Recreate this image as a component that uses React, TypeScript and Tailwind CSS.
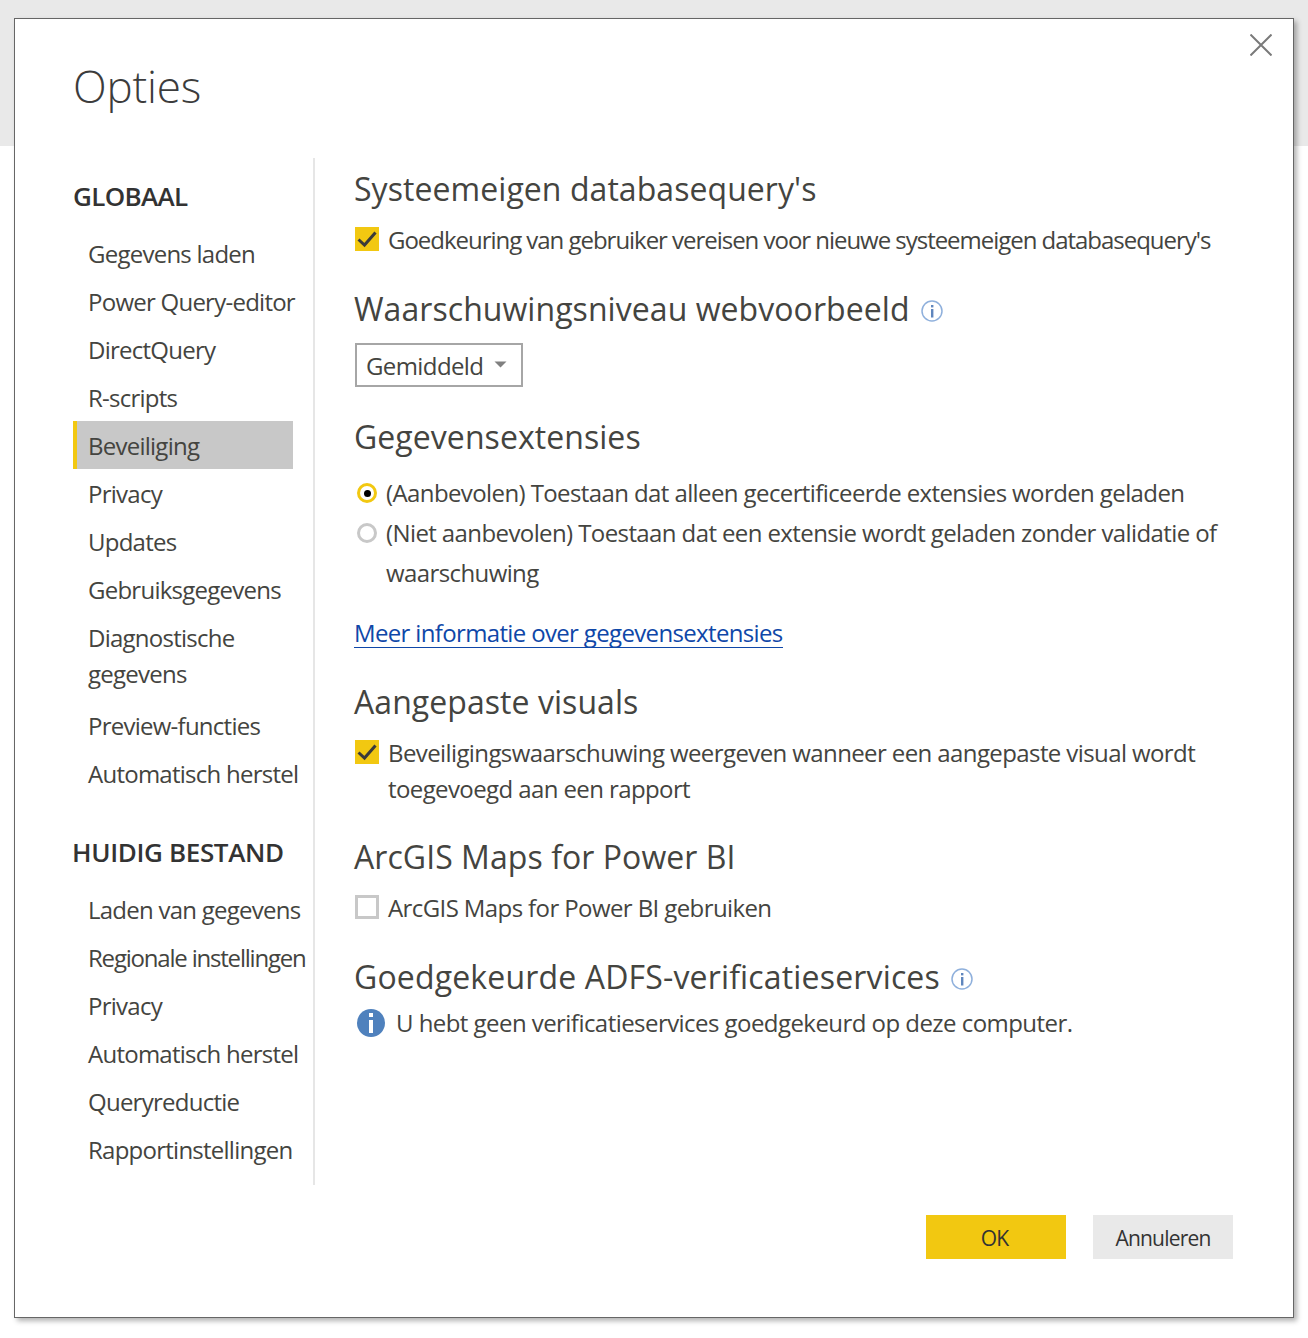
import React from "react";

const globalItems = [
  "Gegevens laden",
  "Power Query-editor",
  "DirectQuery",
  "R-scripts",
  "Beveiliging",
  "Privacy",
  "Updates",
  "Gebruiksgegevens",
  "Diagnostische gegevens",
  "Preview-functies",
  "Automatisch herstel",
];

const fileItems = [
  "Laden van gegevens",
  "Regionale instellingen",
  "Privacy",
  "Automatisch herstel",
  "Queryreductie",
  "Rapportinstellingen",
];

function NavItem({ label }: { label: string }) {
  if (label === "Beveiliging") {
    return (
      <div className="h-[48px] w-[220px] border-l-4 border-[#f2c811] bg-[#c8c8c8] pl-[11px] pt-[7px] leading-[36px]">
        {label}
      </div>
    );
  }
  if (label === "Diagnostische gegevens") {
    return (
      <div className="mb-[4px] w-[190px] pl-[15px] pt-[7px] pb-[5px] leading-[36px]">
        {label}
      </div>
    );
  }
  if (label === "Regionale instellingen") {
    return (
      <div className="h-[48px] whitespace-nowrap pl-[15px] pt-[7px] leading-[36px] tracking-[-1.2px]">
        {label}
      </div>
    );
  }
  return (
    <div className="h-[48px] whitespace-nowrap pl-[15px] pt-[7px] leading-[36px]">
      {label}
    </div>
  );
}

function SectionTitle({ children, className }: { children: React.ReactNode; className: string }) {
  return (
    <div className={`flex h-[40px] items-center gap-[10px] whitespace-nowrap text-[32px] leading-[40px] tracking-[0.06px] ${className}`}>
      {children}
    </div>
  );
}

function Checkbox({ checked }: { checked: boolean }) {
  if (!checked) {
    return <div className="mt-[5px] ml-[1px] h-[24px] w-[24px] shrink-0 border-[3px] border-[#c8c8c8] bg-white" />;
  }
  return (
    <div className="mt-[5px] ml-[1px] h-[24px] w-[24px] shrink-0 bg-[#f2c811]">
      <svg width="24" height="24" viewBox="0 0 24 24" fill="none">
        <path d="M3.5 12.5 L9.5 18 L20.5 5.5" stroke="#3a3a3a" strokeWidth="3" />
      </svg>
    </div>
  );
}

function SmallInfo() {
  return (
    <svg width="24" height="24" viewBox="0 0 24 24" fill="none" className="mt-[2px] shrink-0">
      <circle cx="12" cy="12" r="10" stroke="#8fb0dc" strokeWidth="1.5" />
      <rect x="11" y="10" width="2.4" height="8.5" fill="#5f86bd" />
      <rect x="11" y="6" width="2.4" height="2.4" fill="#5f86bd" />
    </svg>
  );
}

export default function App() {
  return (
    <div className="relative h-[1338px] w-[1308px] overflow-hidden bg-white pt-[18px] pl-[14px] font-['Open_Sans',sans-serif] text-[#444440]">
      <div className="absolute inset-x-0 top-0 h-[146px] bg-[#e9e9e9]" />

      <div className="relative flex h-[1300px] w-[1280px] flex-col border border-[#666666] bg-white shadow-[3px_3px_5px_rgba(0,0,0,0.3)]">
        <button className="absolute top-[15px] right-[21px] text-[#7a7a7a]">
          <svg width="22" height="22" viewBox="0 0 22 22" fill="none" stroke="currentColor" strokeWidth="2">
            <path d="M0.5 0.5 L21.5 21.5 M21.5 0.5 L0.5 21.5" />
          </svg>
        </button>

        <div className="h-[139px] pt-[37px] pl-[58px] text-[44px] leading-[60px] font-light tracking-[-0.2px] text-[#3c3c3c]">Opties</div>

        <div className="flex">
          <div className="ml-[58px] h-[1027px] w-[242px] border-r-2 border-[#e6e6e6] text-[24px] tracking-[-0.75px]">
            <div className="mt-[20px] mb-[15px] text-[26px] leading-[36px] font-semibold tracking-[-0.65px] text-[#333333]">GLOBAAL</div>
            {globalItems.map((item) => (
              <NavItem key={item} label={item} />
            ))}
            <div className="mt-[37px] mb-[15px] -ml-[1px] text-[26px] leading-[36px] font-semibold tracking-[-0.35px] whitespace-nowrap text-[#333333]">
              HUIDIG BESTAND
            </div>
            {fileItems.map((item) => (
              <NavItem key={item} label={item} />
            ))}
          </div>

          <div className="ml-[39px] flex-1 text-[24px] tracking-[-0.6px]">
            <SectionTitle className="mt-[12px]"><span className="pb-[2px]">Systeemeigen databasequery's</span></SectionTitle>
            <div className="mt-[12px] flex gap-[9px] leading-[36px] tracking-[-1.03px] whitespace-nowrap">
              <Checkbox checked />
              <span>Goedkeuring van gebruiker vereisen voor nieuwe systeemeigen databasequery's</span>
            </div>

            <SectionTitle className="mt-[32px]">
              <span className="pb-[2px]">Waarschuwingsniveau webvoorbeeld</span>
              <SmallInfo />
            </SectionTitle>
            <div className="mt-[13px] ml-[1px] flex h-[44px] w-[168px] items-center border-2 border-[#a6a6a6] pl-[9px]">
              <span className="pt-[2px]">Gemiddeld</span>
              <svg width="13" height="7" viewBox="0 0 13 7" className="mt-[-2px] ml-[11px]">
                <path d="M0.5 0.5 H12.5 L6.5 6.5 Z" fill="#808080" />
              </svg>
            </div>

            <SectionTitle className="mt-[31px]"><span className="pb-[2px]">Gegevensextensies</span></SectionTitle>
            <div className="mt-[15px] flex gap-[9px] leading-[40px] whitespace-nowrap">
              <div className="mt-[10px] ml-[3px] flex h-[20px] w-[20px] shrink-0 items-center justify-center rounded-full border-[3px] border-[#f2c811] bg-white">
                <div className="h-[7px] w-[7px] rounded-full bg-black" />
              </div>
              <span>(Aanbevolen) Toestaan dat alleen gecertificeerde extensies worden geladen</span>
            </div>
            <div className="flex w-[880px] gap-[9px] leading-[40px]">
              <div className="mt-[10px] ml-[3px] h-[20px] w-[20px] shrink-0 rounded-full border-[3px] border-[#c8c8c8] bg-white" />
              <span>(Niet aanbevolen) Toestaan dat een extensie wordt geladen zonder validatie of waarschuwing</span>
            </div>

            <div className="mt-[20px] h-[40px]">
              <a className="block h-[35px] w-fit border-b border-[#0f47a8] leading-[40px] tracking-[-0.65px] text-[#0f47a8]">Meer informatie over gegevensextensies</a>
            </div>

            <SectionTitle className="mt-[30px]"><span className="pb-[2px]">Aangepaste visuals</span></SectionTitle>
            <div className="mt-[12px] flex w-[880px] gap-[9px] leading-[36px]">
              <Checkbox checked />
              <span>Beveiligingswaarschuwing weergeven wanneer een aangepaste visual wordt toegevoegd aan een rapport</span>
            </div>

            <SectionTitle className="mt-[31px]"><span className="pb-[2px]">ArcGIS Maps for Power BI</span></SectionTitle>
            <div className="mt-[12px] flex gap-[9px] leading-[36px]">
              <Checkbox checked={false} />
              <span>ArcGIS Maps for Power BI gebruiken</span>
            </div>

            <SectionTitle className="mt-[32px]">
              <span className="pb-[2px] tracking-[0.16px]">Goedgekeurde ADFS-verificatieservices</span>
              <SmallInfo />
            </SectionTitle>
            <div className="mt-[7px] flex items-center gap-[11px] leading-[36px] tracking-[-0.55px]">
              <div className="ml-[3px] flex h-[28px] w-[28px] shrink-0 items-center justify-center rounded-full bg-[#4f81bd]">
                <svg width="8" height="20" viewBox="0 0 8 20" fill="white">
                  <rect x="2" y="0" width="4" height="4" />
                  <rect x="2" y="7" width="4" height="13" />
                </svg>
              </div>
              <span>U hebt geen verificatieservices goedgekeurd op deze computer.</span>
            </div>
          </div>
        </div>

        <div className="mt-[30px] flex justify-end gap-[27px] pr-[60px] text-[21px] tracking-[-0.8px]">
          <button className="h-[44px] w-[140px] bg-[#f2c811] pt-[3px] pr-[3px] text-[#333333]">OK</button>
          <button className="h-[44px] w-[140px] bg-[#e9e9e9] pt-[3px] text-[#333333]">Annuleren</button>
        </div>
      </div>
    </div>
  );
}
